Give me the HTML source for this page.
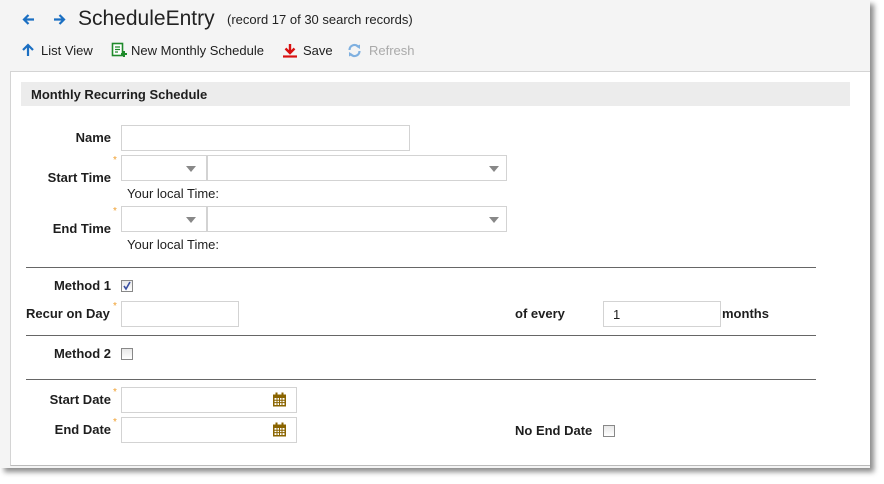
<!DOCTYPE html>
<html><head><meta charset="utf-8"><style>
*{margin:0;padding:0;box-sizing:border-box}
body{width:884px;height:484px;background:#fff;font-family:"Liberation Sans",Arial,sans-serif;font-size:13px;color:#1e1e1e;position:relative;overflow:hidden}
.a{position:absolute}
.win{left:0;top:0;width:870px;height:468px;background:#f4f4f4;box-shadow:4px 4px 5px rgba(0,0,0,.45)}
.panel{left:10px;top:71px;width:860px;height:395px;background:#fff;border-top:1px solid #d4d4d4;border-left:1px solid #d4d4d4;border-bottom:1px solid #bbb}
.lbl{font-weight:bold;font-size:13px;text-align:right;width:100px;left:11px;line-height:15px}
.inp{border:1px solid #d3d3d3;background:#fff}
.star{color:#f0a030;font-size:10px}
.hr{left:26px;width:790px;height:1px;background:#666}
.cb{width:12px;height:12px;border:1px solid #888;background:linear-gradient(#e8e8e8,#fff)}
.tri{width:0;height:0;border-left:5px solid transparent;border-right:5px solid transparent;border-top:6px solid #888}
.tb{top:43px;font-size:13px;line-height:16px}
</style></head><body>
<div class="a win"></div>
<svg class="a" style="left:22px;top:13px" width="13" height="13" viewBox="0 0 13 13"><path d="M12 6.5H2M6.5 2L2 6.5 6.5 11" stroke="#1b6fc2" stroke-width="2.2" fill="none"/></svg>
<svg class="a" style="left:53px;top:13px" width="13" height="13" viewBox="0 0 13 13"><path d="M1 6.5H11M6.5 2L11 6.5 6.5 11" stroke="#1b6fc2" stroke-width="2.2" fill="none"/></svg>
<div class="a" style="left:78px;top:7px;font-size:21px;color:#222">ScheduleEntry</div>
<div class="a" style="left:227px;top:12px;font-size:13px;color:#222">(record 17 of 30 search records)</div>
<svg class="a" style="left:21px;top:43px" width="14" height="14" viewBox="0 0 14 14"><path d="M7 13V2M2 7L7 2 12 7" stroke="#1b6fc2" stroke-width="2.2" fill="none"/></svg>
<div class="a tb" style="left:41px">List View</div>
<svg class="a" style="left:111px;top:42px" width="16" height="16" viewBox="0 0 16 16"><rect x="1.5" y="1.5" width="10" height="12" fill="#fff" stroke="#1e8a2a" stroke-width="1.6"/><path d="M4 5h5M4 7.5h5M4 10h3" stroke="#1e8a2a" stroke-width="1.3"/><path d="M13 9v6M10 12h6" stroke="#1e8a2a" stroke-width="2"/></svg>
<div class="a tb" style="left:131px">New Monthly Schedule</div>
<svg class="a" style="left:282px;top:43px" width="16" height="15" viewBox="0 0 16 15"><path d="M8 1v9M3.5 5.5L8 10 12.5 5.5" stroke="#d81010" stroke-width="2.4" fill="none"/><path d="M1 13.5h14" stroke="#d81010" stroke-width="2.2"/></svg>
<div class="a tb" style="left:303px">Save</div>
<svg class="a" style="left:347px;top:43px" width="15" height="15" viewBox="0 0 15 15"><path d="M2.5 7A5 5 0 0 1 11.5 4M12.5 8A5 5 0 0 1 3.5 11" stroke="#7fb0e0" stroke-width="2.2" fill="none"/><path d="M9 3.5L13 1.5 13 6z M6 11.5L2 13.5 2 9z" fill="#7fb0e0"/></svg>
<div class="a tb" style="left:369px;color:#aaa">Refresh</div>

<div class="a panel"></div>
<div class="a" style="left:21px;top:82px;width:829px;height:24px;background:#ececec"></div>
<div class="a" style="left:31px;top:87px;font-weight:bold;font-size:13px">Monthly Recurring Schedule</div>

<div class="a lbl" style="top:130px">Name</div>
<div class="a inp" style="left:121px;top:125px;width:289px;height:26px"></div>

<div class="a star" style="left:113px;top:155px">*</div>
<div class="a lbl" style="top:170px">Start Time</div>
<div class="a inp" style="left:121px;top:155px;width:86px;height:26px"><div class="a tri" style="left:64px;top:10px"></div></div>
<div class="a inp" style="left:207px;top:155px;width:300px;height:26px"><div class="a tri" style="left:281px;top:10px"></div></div>
<div class="a" style="left:127px;top:186px">Your local Time:</div>

<div class="a star" style="left:113px;top:206px">*</div>
<div class="a lbl" style="top:221px">End Time</div>
<div class="a inp" style="left:121px;top:206px;width:86px;height:26px"><div class="a tri" style="left:64px;top:10px"></div></div>
<div class="a inp" style="left:207px;top:206px;width:300px;height:26px"><div class="a tri" style="left:281px;top:10px"></div></div>
<div class="a" style="left:127px;top:237px">Your local Time:</div>

<div class="a hr" style="top:267px"></div>
<div class="a lbl" style="top:278px">Method 1</div>
<div class="a cb" style="left:121px;top:280px"></div>
<svg class="a" style="left:122px;top:281px" width="10" height="10" viewBox="0 0 10 10"><path d="M2 5l2 3 4-7" stroke="#3a4fa0" stroke-width="1.6" fill="none"/></svg>

<div class="a" style="left:26px;top:306px;font-weight:bold">Recur on Day</div>
<div class="a star" style="left:113px;top:301px">*</div>
<div class="a inp" style="left:121px;top:301px;width:118px;height:26px"></div>
<div class="a" style="left:515px;top:306px;font-weight:bold">of every</div>
<div class="a inp" style="left:603px;top:301px;width:118px;height:26px;padding:5px 0 0 9px;font-size:13px">1</div>
<div class="a" style="left:722px;top:306px;font-weight:bold">months</div>

<div class="a hr" style="top:335px"></div>
<div class="a lbl" style="top:346px">Method 2</div>
<div class="a cb" style="left:121px;top:348px"></div>

<div class="a hr" style="top:379px"></div>
<div class="a star" style="left:113px;top:387px">*</div>
<div class="a lbl" style="top:392px">Start Date</div>
<div class="a inp" style="left:121px;top:387px;width:176px;height:26px"></div>
<div class="a star" style="left:113px;top:417px">*</div>
<div class="a lbl" style="top:422px">End Date</div>
<div class="a inp" style="left:121px;top:417px;width:176px;height:26px"></div>
<svg class="a" style="left:272px;top:392px" width="15" height="15" viewBox="0 0 15 15"><rect x="1" y="2.5" width="13" height="12" fill="#8a6400"/><rect x="2.5" y="6" width="10" height="7" fill="#fff"/><path d="M2.5 8.3h10M2.5 10.6h10M5 6v7M7.5 6v7M10 6v7" stroke="#8a6400" stroke-width="1"/><rect x="3.5" y="0.5" width="2" height="3.5" fill="#8a6400"/><rect x="9.5" y="0.5" width="2" height="3.5" fill="#8a6400"/></svg>
<svg class="a" style="left:272px;top:422px" width="15" height="15" viewBox="0 0 15 15"><rect x="1" y="2.5" width="13" height="12" fill="#8a6400"/><rect x="2.5" y="6" width="10" height="7" fill="#fff"/><path d="M2.5 8.3h10M2.5 10.6h10M5 6v7M7.5 6v7M10 6v7" stroke="#8a6400" stroke-width="1"/><rect x="3.5" y="0.5" width="2" height="3.5" fill="#8a6400"/><rect x="9.5" y="0.5" width="2" height="3.5" fill="#8a6400"/></svg>
<div class="a" style="left:515px;top:423px;font-weight:bold">No End Date</div>
<div class="a cb" style="left:603px;top:425px"></div>
</body></html>
